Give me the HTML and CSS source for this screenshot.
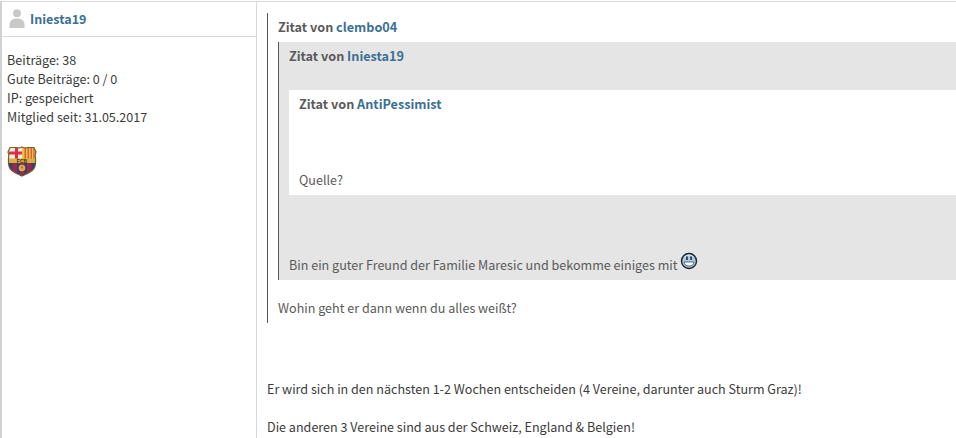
FILE: index.html
```
<!DOCTYPE html>
<html lang="de">
<head>
<meta charset="utf-8">
<title>Forum</title>
<link rel="stylesheet" href="styles.css">
</head>
<body>
<article class="post">
  <aside class="author">
    <header class="author-head">
      <svg class="avatar" width="16" height="20" viewBox="0 0 16 20"><circle cx="8" cy="4.2" r="3.9"/><path d="M0.500 19V16C0.500 12 3 9.500 8 9.500s7.500 2.500 7.500 6.500V19z"/></svg>
      <a class="name">Iniesta19</a>
    </header>
    <div class="stats">
      <div>Beiträge: 38</div>
      <div>Gute Beiträge: 0 / 0</div>
      <div>IP: gespeichert</div>
      <div>Mitglied seit: 31.05.2017</div>
    </div>
    <svg class="crest" width="30" height="31" viewBox="0 0 30 31">
      <defs><clipPath id="shield"><path d="M3 1.500L9 1.500Q12 2.500 15 1Q18 2.500 21 1.500L27 1.500L29 6Q27.500 9 28.500 12V18C28 25 22 26.500 15 30C8 26.500 2 25 1.500 18V12Q2.500 9 1 6z"/></clipPath></defs>
      <g clip-path="url(#shield)">
        <path fill="#f4ead8" d="M0 0h15v13H0z"/>
        <path fill="#d8304b" d="M8 0h3v13H8zM2 5.500h13v3H2z"/>
        <path fill="#f4bd45" d="M15 0h15v13H15z"/>
        <path fill="#d3653a" d="M17.500 2H19v11h-1.500zM20.500 2H22v11h-1.500zM23.500 2H25v11h-1.500zM26.300 2h1.200v11h-1.200z"/>
        <path fill="#363c7d" d="M0 17h30v14H0z"/>
        <path fill="#9c2949" d="M5.500 17H10v14H5.500zM13 17h4v14h-4zM20 17h4.500v14H20z"/>
        <path fill="#d8b043" d="M0 12.500h30V17H0z"/>
        <circle cx="15" cy="22" r="3.300" fill="#e0ad40"/>
        <path d="M14 21l1-1 1 1-.5 1.500h-1z" fill="#a86d37"/>
      </g>
      <path fill="none" stroke="#6d602d" stroke-width="1.200" d="M3 1.500L9 1.500Q12 2.500 15 1Q18 2.500 21 1.500L27 1.500L29 6Q27.500 9 28.500 12V18C28 25 22 26.500 15 30C8 26.500 2 25 1.500 18V12Q2.500 9 1 6z"/>
      <text class="crest-text" x="15" y="16.700" text-anchor="middle">FCB</text>
    </svg>
  </aside>
  <main class="content">
    <blockquote class="quote">
      <div class="cite">Zitat von <a>clembo04</a></div>
      <blockquote class="quote quote-grey">
        <div class="cite">Zitat von <a>Iniesta19</a></div>
        <blockquote class="quote quote-plain">
          <div class="cite">Zitat von <a>AntiPessimist</a></div>
          <p class="reply-3">Quelle?</p>
        </blockquote>
        <p class="reply-2"><span>Bin ein guter Freund der Familie Maresic und bekomme einiges mit</span>
          <svg class="smiley" width="18" height="18" viewBox="0 0 18 18"><circle cx="9" cy="9" r="7.500" fill="#a9cce5" stroke="#17212b" stroke-width="1.400"/><path d="M4.500 5Q9 1 13.500 5" fill="none" stroke="#d9ecf7"/><path d="M6.200 4.500h1.500v3.500H6.200zM10.300 4.500h1.500v3.500h-1.500z" fill="#17212b"/><path d="M4 10h10C13.500 13 12 14 9 14S4.500 13 4 10z" fill="#fff" stroke="#3b4f60" stroke-width=".8"/></svg>
        </p>
      </blockquote>
      <p class="reply-1">Wohin geht er dann wenn du alles weißt?</p>
    </blockquote>
    <p class="body-text">Er wird sich in den nächsten 1-2 Wochen entscheiden (4 Vereine, darunter auch Sturm Graz)!</p>
    <p class="body-text">Die anderen 3 Vereine sind aus der Schweiz, England &amp; Belgien!</p>
  </main>
</article>
</body>
</html>
```
FILE: styles.css
```
* { box-sizing: border-box; }
body {
  margin: 0;
  background: #fff;
  color: #3c3c3c;
  font: 12.57px/19px "Noto Sans CJK SC", "Noto Sans", sans-serif;
  overflow: hidden;
}
p { margin: 0; }
a { color: #3a7095; }
.post {
  display: flex;
  height: 437px;
  margin-top: 1px;
  border-top: 1px solid #d8d9dc;
  border-left: 2px solid #d0d1d6;
  white-space: nowrap;
}
.author { width: 255px; flex: none; border-right: 1px solid #d8d9dc; }
.author-head {
  display: flex;
  align-items: center;
  gap: 5px;
  height: 35px;
  padding-left: 7px;
  border-bottom: 1px solid #d8d9dc;
}
.avatar { fill: #c8c8c8; }
.name { margin-bottom: 2px; font-weight: 700; }
.stats { padding: 13px 0 0 5px; }
.crest { display: block; margin: 20px 0 0 5px; }
.crest-text { font: bold 5px "Liberation Sans", sans-serif; fill: #38301b; }
.content { flex: 1; padding: 11px 0 0 10px; }
.quote {
  margin: 0;
  padding: 4px 0 6px 10px;
  border-left: 1px solid #555;
  color: #5a5a5a;
}
.cite { font-size: 12.65px; font-weight: 700; }
.quote-grey { margin-top: 6px; background: #e5e5e5; }
.quote-plain { margin-top: 25px; border-left: 0; background: #fff; }
.reply-3 { margin-top: 57px; }
.reply-2 { display: flex; gap: 3px; height: 19px; margin-top: 60px; }
.smiley { margin-top: -3px; }
.reply-1 { margin-top: 18px; }
.body-text { margin-top: 56px; }
.body-text + .body-text { margin-top: 19px; }
```
